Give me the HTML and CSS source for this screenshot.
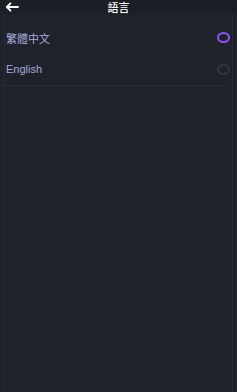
FILE: index.html
```html
<!DOCTYPE html>
<html lang="zh-Hant">
<head>
  <meta charset="UTF-8" />
  <meta name="viewport" content="width=device-width, initial-scale=1.0" />
  <title>語言</title>
  <link rel="stylesheet" href="styles.css">
</head>
<body>
  <div class="page">
    <div class="header">
      <span class="back">
        <svg width="14" height="10" viewBox="0 0 14 10">
          <path d="M13 5H2M5.5 1.3L1.8 5l3.7 3.7" fill="none" stroke="#fff" stroke-width="1.8" stroke-linecap="round" stroke-linejoin="round"/>
        </svg>
      </span>
      <h1>語言</h1>
    </div>

    <div class="lang-list">
      <div class="lang-item">
        <span class="lang-name cjk">繁體中文</span>
        <span class="radio checked"></span>
      </div>
      <div class="lang-item last">
        <span class="lang-name">English</span>
        <span class="radio"></span>
      </div>
    </div>
  </div>
</body>
</html>
```

FILE: styles.css
```css
/* Dark settings page */
body {
  margin: 0;
  background: #1f222a;
  font-family: "Noto Sans CJK TC", "Liberation Sans", sans-serif;
  color: #a5acdb;
}
.page {
  min-height: 392px;
  border-left: 1px solid #272a33;
  border-right: 1px solid #272a33;
  margin: 0 4px;
}
/* Top bar */
.header {
  position: relative;
  height: 14px;
  display: flex;
  align-items: center;
  justify-content: center;
  background: #1c1e26;
  margin: 0 -5px;
}
.header h1 {
  margin: 0;
  font-size: 11px;
  font-weight: 500;
  line-height: 14px;
  color: #fff;
}
.back {
  position: absolute;
  left: 5px;
  top: 2px;
  display: flex;
}
/* Language rows */
.lang-list {
  margin: 8px -5px 0;
}
.lang-item {
  height: 31px;
  display: flex;
  align-items: center;
  justify-content: space-between;
  padding: 0 7px 0 6px;
}
.lang-item.last {
  height: 32px;
  margin: 0 12px 0 0;
  padding-right: 0;
  border-bottom: 1px solid #272a33;
}
.lang-item.last .radio {
  margin-right: -5px;
}
.lang-name {
  font-size: 11px;
  font-family: "Liberation Sans", sans-serif;
}
.lang-name.cjk {
  font-family: "Noto Sans CJK TC", sans-serif;
}
.radio {
  width: 9px;
  height: 7px;
  border: 2px solid #33363e;
  border-radius: 50%;
}
.radio.checked {
  border-color: #8a55f0;
}
```
